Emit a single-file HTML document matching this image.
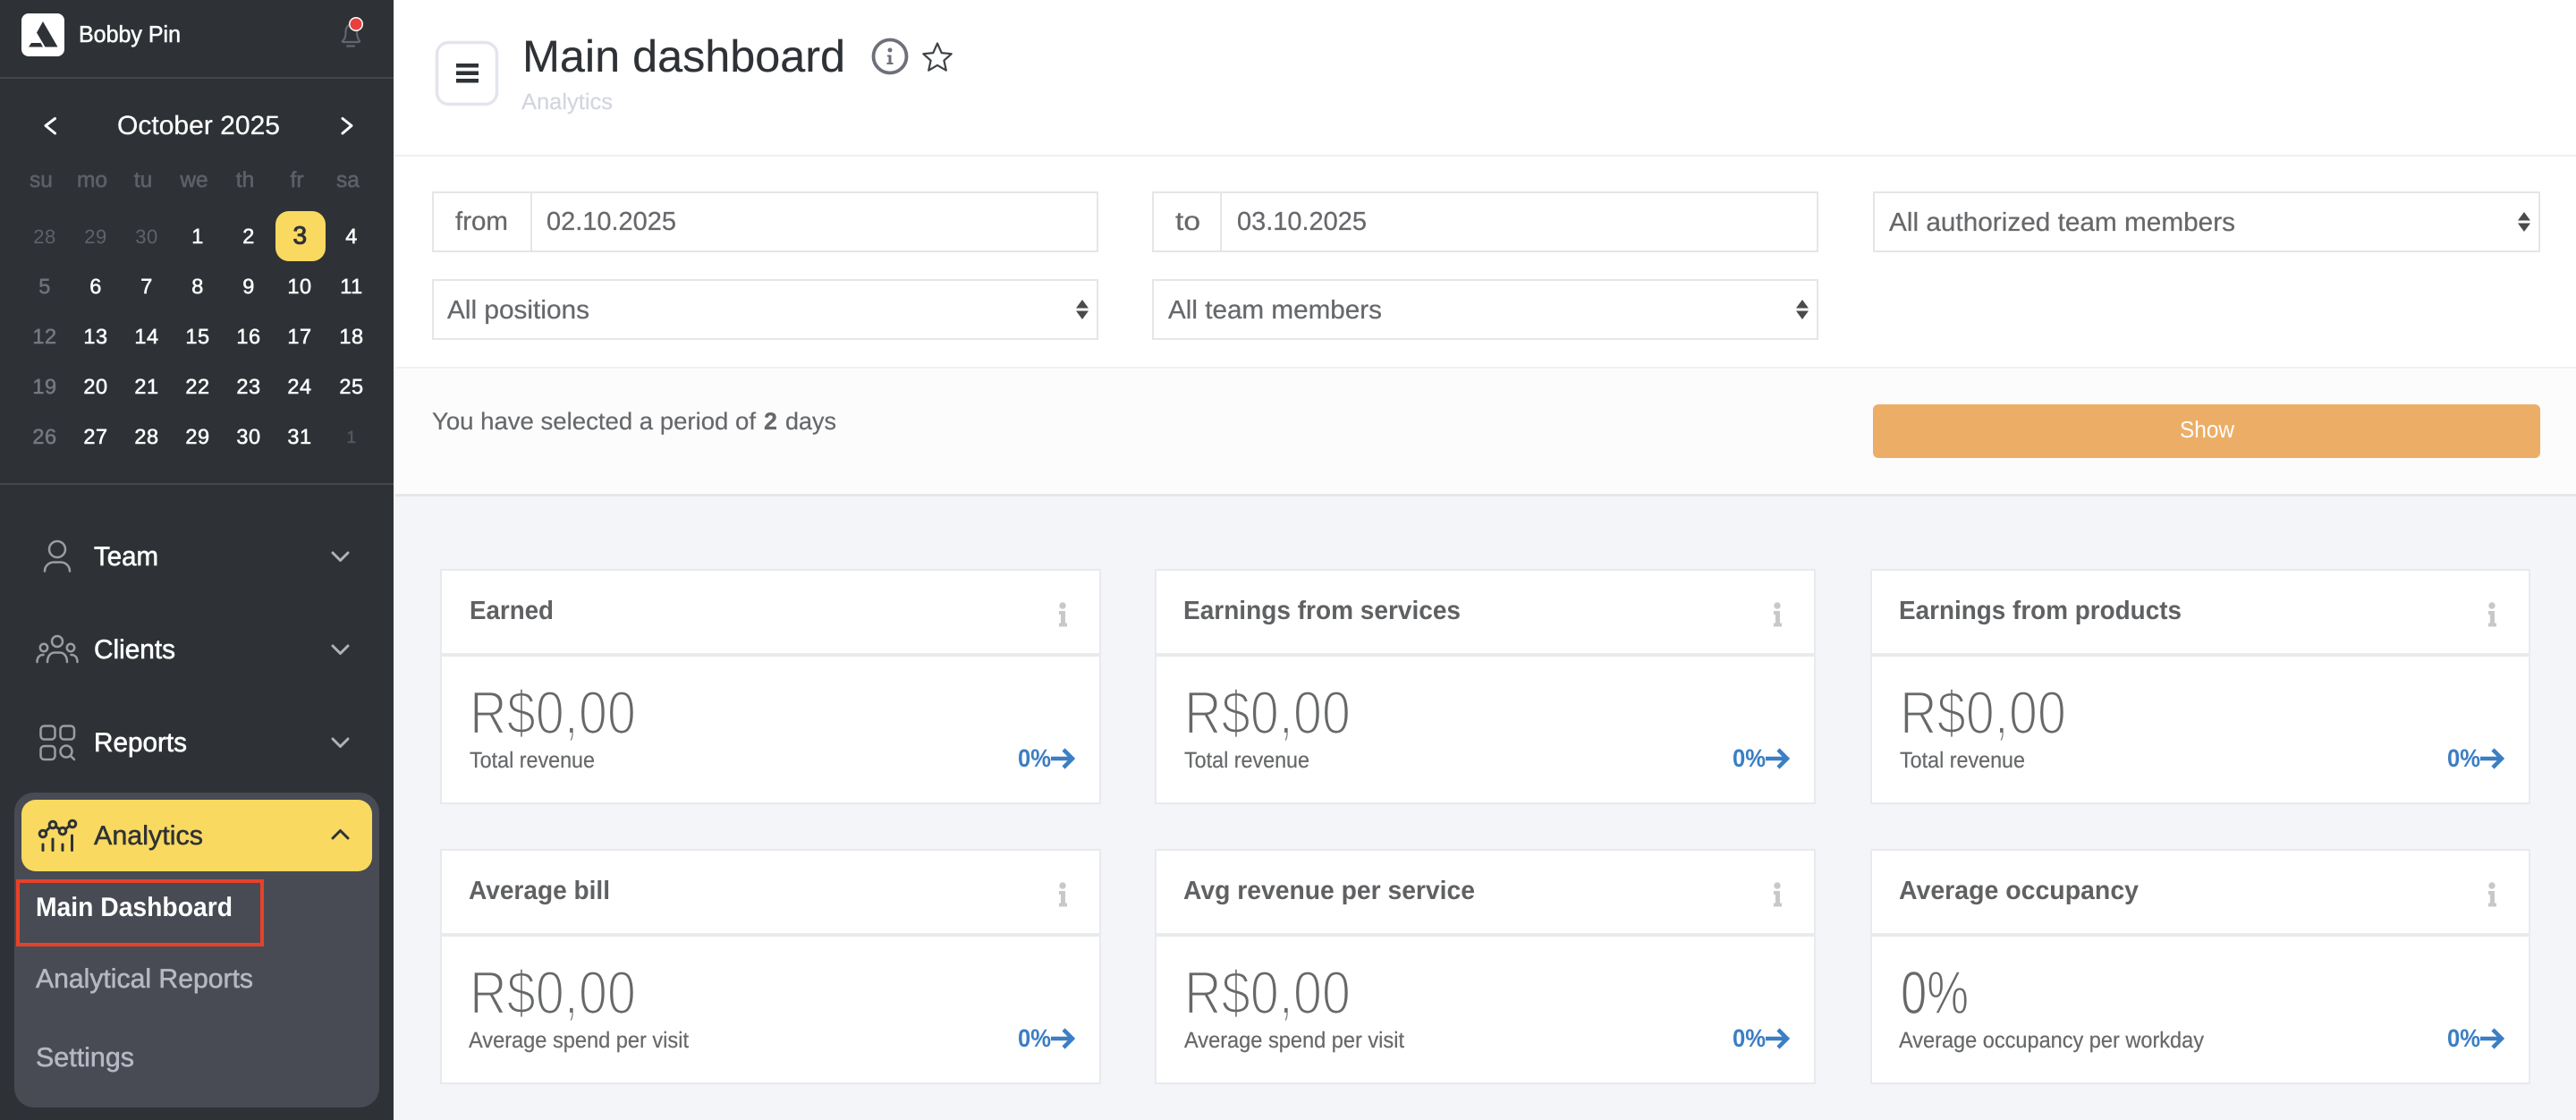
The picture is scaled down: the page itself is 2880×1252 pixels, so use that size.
<!DOCTYPE html>
<html lang="en"><head><meta charset="utf-8"><title>Main dashboard</title>
<style>
html,body{margin:0;padding:0;width:2880px;height:1252px;overflow:hidden;background:#f4f5f9}
svg{display:block}
text{font-family:"Liberation Sans",Arial,sans-serif;text-rendering:geometricPrecision}
.d text{font-size:23.5px;text-anchor:middle;letter-spacing:.5px;fill:#fff;stroke:#fff;stroke-width:.55px}
.w text{font-size:24.5px;text-anchor:middle;fill:#5d6068;stroke:#5d6068;stroke-width:.6px}
.g text{fill:#66686b;stroke:#66686b;stroke-width:.25px;font-size:29px}
.t{font-size:29px;font-weight:700;fill:#5f6163}
.a{font-size:68px;fill:#66686a;stroke:#fff;stroke-width:2.2px}
.s{font-size:25px;fill:#66686a;stroke:#66686a;stroke-width:.2px}
.p{font-size:28px;font-weight:700;fill:#3b7ec3}
.n{font-size:30px;fill:#fff;stroke:#fff;stroke-width:.6px}
</style></head><body>
<svg width="2880" height="1252" viewBox="0 0 2880 1252" xmlns="http://www.w3.org/2000/svg">
<!-- backgrounds -->
<rect width="2880" height="1252" fill="#f4f5f9"/>
<rect x="442" width="2438" height="173" fill="#fff"/>
<rect x="442" y="173" width="2438" height="2" fill="#f0f1f2"/>
<rect x="442" y="175" width="2438" height="235" fill="#fff"/>
<rect x="442" y="410" width="2438" height="2" fill="#f0f1f2"/>
<rect x="442" y="412" width="2438" height="140" fill="#fcfcfd"/>
<rect x="442" y="552" width="2438" height="3" fill="#e6e7e9"/>
<rect width="440" height="1252" fill="#2e3236"/>

<!-- sidebar header -->
<rect y="86" width="440" height="2" fill="#44484d"/>
<rect x="24" y="15" width="48" height="48" rx="8" fill="#fff"/>
<path d="M48 24L64.500 52.500H50.500L47.500 47.500L41 36.500Z" fill="#2e3236"/>
<path d="M35 48H45.500L48 52.500H32Z" fill="#2e3236"/>
<text x="88" y="47" font-size="26" fill="#fff" stroke="#fff" stroke-width=".55" textLength="114" lengthAdjust="spacingAndGlyphs">Bobby Pin</text>
<path d="M383 46c2.500-2.500 3.500-4.500 3.500-10c0-5.500 3-8.500 5.500-8.500c4 0 7 3 7 8c0 6 1.500 8.500 3 10.500c0 1-1 1-2 1H384c-1 0-1.500-.500-1-1Z" fill="none" stroke="#62656b" stroke-width="2.200"/>
<path d="M388 51.500h8" stroke="#62656b" stroke-width="2.200" stroke-linecap="round"/>
<circle cx="398" cy="27" r="8" fill="#fff"/><circle cx="398" cy="27" r="6.500" fill="#e8403c"/>

<!-- calendar -->
<path d="M61.500 132.500L51 140.500L61.500 149" fill="none" stroke="#fff" stroke-width="3" stroke-linecap="round" stroke-linejoin="round"/>
<path d="M383 132.500L393 140.500L383 149" fill="none" stroke="#fff" stroke-width="3" stroke-linecap="round" stroke-linejoin="round"/>
<text x="131" y="150" font-size="29.500" fill="#fff" stroke="#fff" stroke-width=".25" textLength="182" lengthAdjust="spacingAndGlyphs">October 2025</text>
<g class="w">
<text x="46" y="209">su</text><text x="103" y="209">mo</text><text x="160" y="209">tu</text><text x="217" y="209">we</text><text x="274" y="209">th</text><text x="332" y="209">fr</text><text x="389" y="209">sa</text>
</g>
<rect x="308" y="236" width="56" height="56" rx="15" fill="#f9d95f"/>
<g class="d">
<text x="50" y="272" style="fill:#5f6268;stroke:none;font-size:22px">28</text><text x="107" y="272" style="fill:#5f6268;stroke:none;font-size:22px">29</text><text x="164" y="272" style="fill:#5f6268;stroke:none;font-size:22px">30</text>
<text x="221" y="272">1</text><text x="278" y="272">2</text>
<text x="335.500" y="272.500" style="fill:#2e3236;stroke:#2e3236;stroke-width:1px;font-size:28px">3</text>
<text x="393" y="272">4</text>
<text x="50" y="328" style="fill:#6f727a;stroke:#6f727a">5</text><text x="107" y="328">6</text><text x="164" y="328">7</text><text x="221" y="328">8</text><text x="278" y="328">9</text><text x="335" y="328">10</text><text x="393" y="328">11</text>
<text x="50" y="384" style="fill:#757881;stroke:#757881">12</text><text x="107" y="384">13</text><text x="164" y="384">14</text><text x="221" y="384">15</text><text x="278" y="384">16</text><text x="335" y="384">17</text><text x="393" y="384">18</text>
<text x="50" y="440" style="fill:#757881;stroke:#757881">19</text><text x="107" y="440">20</text><text x="164" y="440">21</text><text x="221" y="440">22</text><text x="278" y="440">23</text><text x="335" y="440">24</text><text x="393" y="440">25</text>
<text x="50" y="496" style="fill:#757881;stroke:#757881">26</text><text x="107" y="496">27</text><text x="164" y="496">28</text><text x="221" y="496">29</text><text x="278" y="496">30</text><text x="335" y="496">31</text><text x="393" y="495" style="fill:#54585e;stroke:#54585e;font-size:19px">1</text>
</g>
<rect y="540" width="440" height="2" fill="#44484d"/>

<!-- nav -->
<g fill="none" stroke="#9b9da0" stroke-width="2.500" stroke-linecap="round" stroke-linejoin="round">
<circle cx="64" cy="614" r="9"/>
<path d="M50 638.500c0-6 5-10 10-10h8c5 0 10 4 10 10"/>
<circle cx="64" cy="717" r="6"/><circle cx="49" cy="724" r="4.200"/><circle cx="79" cy="724" r="4.200"/>
<path d="M53 740c0-7 4-10.500 8-10.500h6c4 0 8 3.500 8 10.500"/>
<path d="M41.500 740c0-5 2.500-8 7-8"/><path d="M86.500 740c0-5-2.500-8-7-8"/>
<rect x="45.500" y="811.500" width="16" height="15" rx="4"/><rect x="67.500" y="811.500" width="15.500" height="15" rx="4"/><rect x="45.500" y="834" width="16" height="15" rx="4"/>
<circle cx="74" cy="840" r="6.500"/><path d="M79 845l4 4"/>
</g>
<g fill="none" stroke="#b0b2b4" stroke-width="3" stroke-linecap="round" stroke-linejoin="round">
<path d="M372 618l8.500 8.500l8.500-8.500"/><path d="M372 722l8.500 8.500l8.500-8.500"/><path d="M372 826l8.500 8.500l8.500-8.500"/>
</g>
<text class="n" x="105" y="632" textLength="72" lengthAdjust="spacingAndGlyphs">Team</text>
<text class="n" x="105" y="736" textLength="91" lengthAdjust="spacingAndGlyphs">Clients</text>
<text class="n" x="105" y="840" textLength="104" lengthAdjust="spacingAndGlyphs">Reports</text>

<rect x="16" y="886" width="408" height="352" rx="22" fill="#484b53"/>
<rect x="24" y="894" width="392" height="80" rx="16" fill="#f9d95f"/>
<g fill="none" stroke="#2e3236" stroke-width="3" stroke-linecap="round">
<circle cx="48" cy="932" r="3.800"/><circle cx="59" cy="922" r="3.800"/><circle cx="70" cy="929" r="3.800"/><circle cx="81" cy="921" r="3.800"/>
<path d="M51 929.500l5-5M62.500 924l4 3M73 927l5-4M48 944v6.500M59 938v12.500M70 944v6.500M80.500 934v16.500"/>
</g>
<text x="105" y="944" font-size="30" fill="#2e3236" stroke="#2e3236" stroke-width=".5" textLength="122" lengthAdjust="spacingAndGlyphs">Analytics</text>
<path d="M372 937l8.500-8.500l8.500 8.500" fill="none" stroke="#2e3236" stroke-width="3" stroke-linecap="round" stroke-linejoin="round"/>
<rect x="20" y="985" width="273" height="71" fill="none" stroke="#e8412a" stroke-width="4"/>
<text x="40" y="1024" font-size="30" font-weight="700" fill="#fff" textLength="220" lengthAdjust="spacingAndGlyphs">Main Dashboard</text>
<text x="40" y="1104" font-size="30" fill="#b5b8c4" stroke="#b5b8c4" stroke-width=".55" textLength="243" lengthAdjust="spacingAndGlyphs">Analytical Reports</text>
<text x="40" y="1192" font-size="30" fill="#b5b8c4" stroke="#b5b8c4" stroke-width=".55" textLength="110" lengthAdjust="spacingAndGlyphs">Settings</text>

<!-- header -->
<rect x="488.500" y="47.500" width="67" height="69" rx="13" fill="#fff" stroke="#e2e5ec" stroke-width="3.500"/>
<path d="M510 71h25v4.500h-25zM510 79.500h25v4.500h-25zM510 88h25v4.500h-25z" fill="#2e3236"/>
<text x="584" y="80" font-size="50" fill="#2e3236" stroke="#2e3236" stroke-width=".2" textLength="361" lengthAdjust="spacingAndGlyphs">Main dashboard</text>
<circle cx="995" cy="63" r="18.500" fill="none" stroke="#6e7079" stroke-width="3.800"/>
<circle cx="995" cy="56" r="2.500" fill="#6e7079"/><path d="M992 61.500h4.500v8.500h2v2h-7v-2h2v-6.500h-1.500z" fill="#6e7079"/>
<path d="M1048 48.500l4.700 10.600l11 1.100l-8.300 7.500l2.400 11l-9.800-5.800l-9.800 5.800l2.400-11l-8.300-7.500l11-1.100z" fill="none" stroke="#3e4246" stroke-width="2.200" stroke-linejoin="round"/>
<text x="583" y="122" font-size="25" fill="#d2d5dd" stroke="#d2d5dd" stroke-width=".2" textLength="102" lengthAdjust="spacingAndGlyphs">Analytics</text>

<!-- filters -->
<g fill="#fff" stroke="#e5e6e8" stroke-width="2">
<rect x="484" y="215" width="743" height="66"/>
<rect x="1289" y="215" width="743" height="66"/>
<rect x="2095" y="215" width="744" height="66"/>
<rect x="484" y="313" width="743" height="66"/>
<rect x="1289" y="313" width="743" height="66"/>
</g>
<path d="M594 215v66M1365 215v66" stroke="#e5e6e8" stroke-width="2"/>
<g class="g">
<text x="509" y="257" textLength="59" lengthAdjust="spacingAndGlyphs">from</text>
<text x="611" y="257" textLength="145" lengthAdjust="spacingAndGlyphs">02.10.2025</text>
<text x="1314" y="257" textLength="28" lengthAdjust="spacingAndGlyphs">to</text>
<text x="1383" y="257" textLength="145" lengthAdjust="spacingAndGlyphs">03.10.2025</text>
<text x="2112" y="258" textLength="387" lengthAdjust="spacingAndGlyphs">All authorized team members</text>
<text x="500" y="356" textLength="159" lengthAdjust="spacingAndGlyphs">All positions</text>
<text x="1306" y="356" textLength="239" lengthAdjust="spacingAndGlyphs">All team members</text>
</g>
<g fill="#4a4a4a">
<path d="M2822 237l7 9.500h-14zM2822 259l7-9.500h-14z"/>
<path d="M1210 335l7 9.500h-14zM1210 357l7-9.500h-14z"/>
<path d="M2015 335l7 9.500h-14zM2015 357l7-9.500h-14z"/>
</g>
<g font-size="27" fill="#66686b" stroke="#66686b" stroke-width=".2">
<text x="483" y="480" textLength="362" lengthAdjust="spacingAndGlyphs">You have selected a period of</text>
<text x="854" y="480" font-weight="700" textLength="15" lengthAdjust="spacingAndGlyphs">2</text>
<text x="878" y="480" textLength="57" lengthAdjust="spacingAndGlyphs">days</text>
</g>
<rect x="2094" y="452" width="746" height="60" rx="6" fill="#ecae66"/>
<text x="2437" y="489" font-size="26" fill="#fff" textLength="61" lengthAdjust="spacingAndGlyphs">Show</text>

<!-- cards -->
<g fill="#fff" stroke="#e8eaee" stroke-width="2">
<rect x="493" y="637" width="737" height="261"/><rect x="1292" y="637" width="737" height="261"/><rect x="2092" y="637" width="736" height="261"/>
<rect x="493" y="950" width="737" height="261"/><rect x="1292" y="950" width="737" height="261"/><rect x="2092" y="950" width="736" height="261"/>
</g>
<g fill="#e8eaee">
<rect x="492" y="730" width="739" height="4"/><rect x="1292" y="730" width="738" height="4"/><rect x="2091" y="730" width="738" height="4"/>
<rect x="492" y="1043" width="739" height="4"/><rect x="1292" y="1043" width="738" height="4"/><rect x="2091" y="1043" width="738" height="4"/>
</g>
<text class="t" x="525" y="692" textLength="94" lengthAdjust="spacingAndGlyphs">Earned</text>
<text class="t" x="1323" y="692" textLength="310" lengthAdjust="spacingAndGlyphs">Earnings from services</text>
<text class="t" x="2123" y="692" textLength="316" lengthAdjust="spacingAndGlyphs">Earnings from products</text>
<text class="t" x="524" y="1005" textLength="158" lengthAdjust="spacingAndGlyphs">Average bill</text>
<text class="t" x="1323" y="1005" textLength="326" lengthAdjust="spacingAndGlyphs">Avg revenue per service</text>
<text class="t" x="2123" y="1005" textLength="268" lengthAdjust="spacingAndGlyphs">Average occupancy</text>

<text class="a" x="525" y="820" textLength="186" lengthAdjust="spacingAndGlyphs">R$0,00</text>
<text class="a" x="1324" y="820" textLength="186" lengthAdjust="spacingAndGlyphs">R$0,00</text>
<text class="a" x="2124" y="820" textLength="186" lengthAdjust="spacingAndGlyphs">R$0,00</text>
<text class="a" x="525" y="1133" textLength="186" lengthAdjust="spacingAndGlyphs">R$0,00</text>
<text class="a" x="1324" y="1133" textLength="186" lengthAdjust="spacingAndGlyphs">R$0,00</text>
<text class="a" x="2125" y="1133" textLength="76" lengthAdjust="spacingAndGlyphs" style="stroke-width:1.4px">0%</text>

<text class="s" x="525" y="858" textLength="140" lengthAdjust="spacingAndGlyphs">Total revenue</text>
<text class="s" x="1324" y="858" textLength="140" lengthAdjust="spacingAndGlyphs">Total revenue</text>
<text class="s" x="2124" y="858" textLength="140" lengthAdjust="spacingAndGlyphs">Total revenue</text>
<text class="s" x="524" y="1171" textLength="246" lengthAdjust="spacingAndGlyphs">Average spend per visit</text>
<text class="s" x="1324" y="1171" textLength="246" lengthAdjust="spacingAndGlyphs">Average spend per visit</text>
<text class="s" x="2123" y="1171" textLength="341" lengthAdjust="spacingAndGlyphs">Average occupancy per workday</text>

<text class="p" x="1138" y="857" textLength="37" lengthAdjust="spacingAndGlyphs">0%</text>
<text class="p" x="1937" y="857" textLength="37" lengthAdjust="spacingAndGlyphs">0%</text>
<text class="p" x="2736" y="857" textLength="37" lengthAdjust="spacingAndGlyphs">0%</text>
<text class="p" x="1138" y="1170" textLength="37" lengthAdjust="spacingAndGlyphs">0%</text>
<text class="p" x="1937" y="1170" textLength="37" lengthAdjust="spacingAndGlyphs">0%</text>
<text class="p" x="2736" y="1170" textLength="37" lengthAdjust="spacingAndGlyphs">0%</text>
<g fill="none" stroke="#3b7ec3" stroke-width="4.500">
<path d="M1175 848h23M1189 838l10 10l-10 10"/><path d="M1974 848h23M1988 838l10 10l-10 10"/><path d="M2773 848h23M2787 838l10 10l-10 10"/>
<path d="M1175 1161h23M1189 1151l10 10l-10 10"/><path d="M1974 1161h23M1988 1151l10 10l-10 10"/><path d="M2773 1161h23M2787 1151l10 10l-10 10"/>
</g>
<g fill="#c8c8c8">
<g><circle cx="1188" cy="677" r="3.700"/><path d="M1184 683h7v13.500h2v4h-9v-4h2v-9.500h-2z"/></g>
<g transform="translate(799,0)"><circle cx="1188" cy="677" r="3.700"/><path d="M1184 683h7v13.500h2v4h-9v-4h2v-9.500h-2z"/></g>
<g transform="translate(1598,0)"><circle cx="1188" cy="677" r="3.700"/><path d="M1184 683h7v13.500h2v4h-9v-4h2v-9.500h-2z"/></g>
<g transform="translate(0,313)"><circle cx="1188" cy="677" r="3.700"/><path d="M1184 683h7v13.500h2v4h-9v-4h2v-9.500h-2z"/></g>
<g transform="translate(799,313)"><circle cx="1188" cy="677" r="3.700"/><path d="M1184 683h7v13.500h2v4h-9v-4h2v-9.500h-2z"/></g>
<g transform="translate(1598,313)"><circle cx="1188" cy="677" r="3.700"/><path d="M1184 683h7v13.500h2v4h-9v-4h2v-9.500h-2z"/></g>
</g>
</svg>
</body></html>
